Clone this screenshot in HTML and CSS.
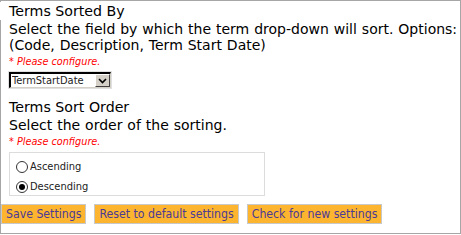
FILE: index.html
```html
<!DOCTYPE html>
<html>
<head>
<meta charset="utf-8">
<link rel="stylesheet" href="styles.css">
</head>
<body>
<div class="panel">
  <div class="content">
    <div class="title first">Terms Sorted By</div>
    <div class="desc">Select the field by which the term drop-down will sort. Options: (Code, Description, Term Start Date)</div>
    <div class="note">* Please configure.</div>
    <div class="select">
      <select class="select-input">
        <option>TermStartDate</option>
        <option>Code</option>
        <option>Description</option>
      </select>
      <span class="select-btn"><svg width="9" height="6" viewBox="0 0 9 6"><path d="M1 1 L4.5 4.5 L8 1" fill="none" stroke="#000" stroke-width="1.6"/></svg></span>
    </div>
    <div class="title second">Terms Sort Order</div>
    <div class="desc">Select the order of the sorting.</div>
    <div class="note">* Please configure.</div>
    <div class="radios">
      <label class="radio-row"><input type="radio" name="order" class="radio"> Ascending</label>
      <label class="radio-row"><input type="radio" name="order" class="radio" checked> Descending</label>
    </div>
  </div>
  <div class="buttons">
    <button class="btn">Save Settings</button>
    <button class="btn">Reset to default settings</button>
    <button class="btn">Check for new settings</button>
  </div>
</div>
</body>
</html>
```
FILE: styles.css
```css
html, body {
  margin: 0;
  padding: 0;
  background: #fff;
}
body {
  font-family: "DejaVu Sans", Verdana, sans-serif;
  color: #000;
  width: 461px;
  height: 235px;
  overflow: hidden;
}
.panel {
  width: 461px;
  height: 234px;
  box-sizing: border-box;
  border: 1px solid #a6a6a6;
}
.content {
  padding: 0 0 0 8px;
}
.title {
  font-size: 14.2px;
  line-height: 17px;
  white-space: nowrap;
}
.title.first {
  display: inline-block;
  background: #fff;
  margin: -1px 0 0 -9px;
  padding: 1px 0 0 9px;
}
.title.second {
  margin-top: 11px;
}
.desc {
  font-size: 14px;
  word-spacing: 0.5px;
  line-height: 16px;
  margin-top: 1px;
}
.note {
  font-family: "DejaVu Sans", Verdana, sans-serif;
  font-size: 9.7px;
  line-height: 12px;
  font-style: italic;
  color: #ff0000;
  margin-top: 3px;
}
.select {
  display: inline-flex;
  align-items: stretch;
  margin-top: 4px;
  height: 16px;
  box-sizing: border-box;
  border-top: 2px solid #000;
  border-left: 2px solid #000;
  border-right: 1px solid #d4d0c8;
  border-bottom: 1px solid #d4d0c8;
  outline: 1px solid #e0e0e0;
  background: #fff;
}
.select-input {
  appearance: none;
  -webkit-appearance: none;
  border: none;
  outline: none;
  background: #fff;
  font-family: "DejaVu Sans Condensed", "DejaVu Sans", sans-serif;
  font-size: 11px;
  color: #222;
  padding: 0 0 0 1px;
  margin: 0;
  width: 84px;
  height: 13px;
  line-height: 13px;
}
.select-btn {
  width: 15px;
  background: #d4d0c8;
  box-sizing: border-box;
  border: 1px solid #fff;
  border-right-color: #404040;
  border-bottom-color: #404040;
  display: flex;
  align-items: center;
  justify-content: center;
}
.radios {
  margin-top: 4px;
  border: 1px solid #dcdcdc;
  width: 256px;
  height: 44px;
  box-sizing: border-box;
  padding: 7px 0 0 6px;
}
.radio-row {
  display: flex;
  align-items: center;
  gap: 2px;
  font-family: "DejaVu Sans Condensed", "DejaVu Sans", sans-serif;
  font-size: 11px;
  line-height: 13px;
  height: 13px;
  color: #222;
  margin-bottom: 7px;
}
.radio {
  appearance: none;
  -webkit-appearance: none;
  width: 12px;
  height: 12px;
  margin: 0;
  border: 1px solid #333;
  border-radius: 50%;
  background: #fff;
  box-sizing: border-box;
  display: grid;
  place-items: center;
}
.radio:checked::after {
  content: "";
  width: 6px;
  height: 6px;
  border-radius: 50%;
  background: #000;
}
.buttons {
  display: flex;
  gap: 8px;
  margin-top: 8px;
}
.btn {
  height: 20px;
  box-sizing: border-box;
  background: #fdb52f;
  border: 1px solid #c8c8c8;
  color: #4b3a96;
  font-family: "DejaVu Sans Condensed", "DejaVu Sans", sans-serif;
  font-size: 12.2px;
  padding: 0 4px;
  margin: 0;
}
```
